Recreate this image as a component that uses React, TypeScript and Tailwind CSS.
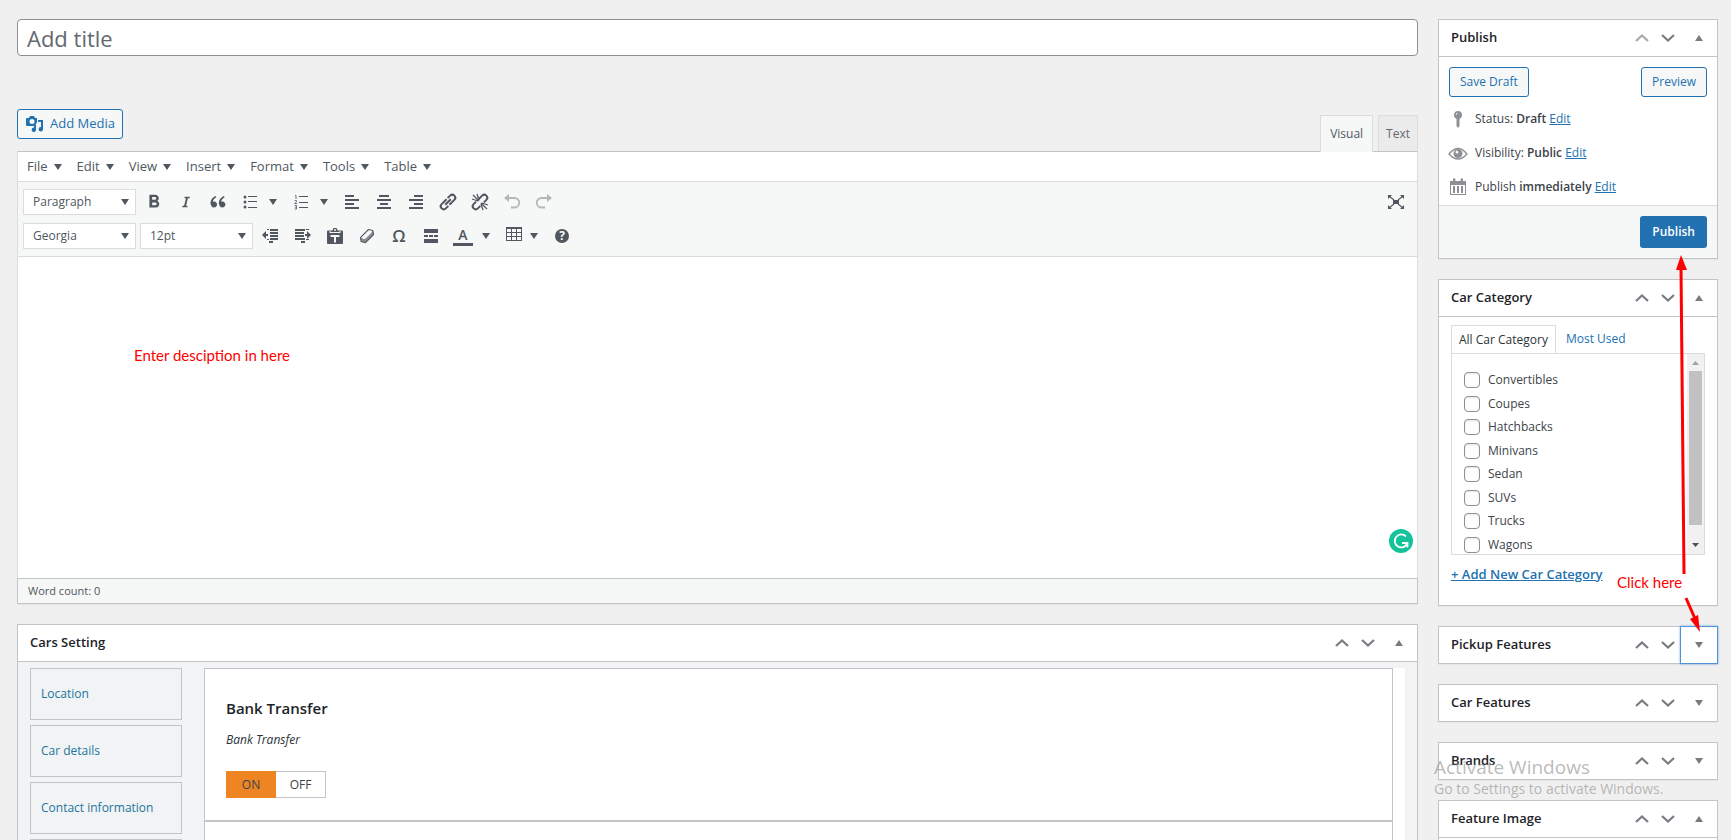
import type { ReactNode } from "react";
import { FaItalic } from "react-icons/fa";
import { MdFormatBold } from "react-icons/md";
import { RiDoubleQuotesL } from "react-icons/ri";

const menus = ["File", "Edit", "View", "Insert", "Format", "Tools", "Table"];

const categories = [
  "Convertibles",
  "Coupes",
  "Hatchbacks",
  "Minivans",
  "Sedan",
  "SUVs",
  "Trucks",
  "Wagons",
];

const settingTabs = ["Location", "Car details", "Contact information"];

function Svg({ children, className = "" }: { children: ReactNode; className?: string }) {
  return (
    <svg viewBox="0 0 20 20" width="20" height="20" fill="currentColor" className={`shrink-0 ${className}`} aria-hidden="true">
      {children}
    </svg>
  );
}

function Caret({ className = "" }: { className?: string }) {
  return (
    <svg viewBox="0 0 8 6" width="8" height="6" fill="currentColor" className={`shrink-0 ${className}`} aria-hidden="true">
      <path d="M0 0h8L4 6z" />
    </svg>
  );
}

/* Toolbar icons */
const icons = {
  bullets: (
    <Svg>
      <circle cx="5" cy="5" r="1.5" />
      <circle cx="5" cy="10" r="1.5" />
      <circle cx="5" cy="15" r="1.5" />
      <path d="M8 4h9v1H8zM8 9h9v1H8zM8 15h9v1H8z" />
    </Svg>
  ),
  numbers: (
    <Svg>
      <path d="M8 4h9v1H8zM8 10h9v1H8zM8 15h9v1H8z" />
      <path
        d="M4 3.5h1V7M3.5 8.5h2v1.3l-1.8 1.7H6M3.5 13.5h2v3.5h-2M4 15.2h1.5"
        fill="none"
        stroke="currentColor"
        strokeWidth="0.8"
      />
    </Svg>
  ),
  left: (
    <Svg>
      <path d="M3 3h9v2H3zM3 7h14v2H3zM3 11h9v2H3zM3 15h14v2H3z" />
    </Svg>
  ),
  center: (
    <Svg>
      <path d="M5 3h10v2H5zM3 7h14v2H3zM6 11h8v2H6zM3 15h14v2H3z" />
    </Svg>
  ),
  right: (
    <Svg>
      <path d="M8 3h9v2H8zM3 7h14v2H3zM8 11h9v2H8zM3 15h14v2H3z" />
    </Svg>
  ),
  link: (
    <Svg>
      <g transform="rotate(-45 10 10)" fill="none" stroke="currentColor" strokeWidth="2">
        <path d="M11 7H4a3 3 0 0 0 0 6H7.5M9 13h7a3 3 0 0 0 0-6H12.5" />
        <path d="M6 10h8" />
      </g>
    </Svg>
  ),
  unlink: (
    <Svg>
      <g transform="rotate(-45 10 10)" fill="none" stroke="currentColor" strokeWidth="2">
        <path d="M7.5 7H4a3 3 0 0 0 0 6h3.5M12.5 13H16a3 3 0 0 0 0-6H11" />
      </g>
      <path
        d="M9 9 3 3M9 8 7 2M8 9 2 7M11 11l6 6M12 11l6 2M11 12l2 6"
        fill="none"
        stroke="currentColor"
        strokeWidth="1.3"
      />
    </Svg>
  ),
  undo: (
    <Svg>
      <path d="M7 2v8L2 6z" />
      <path d="M6 6h6.5a4.5 4.5 0 0 1 0 9.5H9" fill="none" stroke="currentColor" strokeWidth="1.8" />
    </Svg>
  ),
  redo: (
    <Svg>
      <path d="M13 2v8l5-4z" />
      <path d="M14 6H7.5a4.5 4.5 0 0 0 0 9.5H11" fill="none" stroke="currentColor" strokeWidth="1.8" />
    </Svg>
  ),
  fullscreen: (
    <Svg>
      <path d="M7 8h6v4H7zM2 3h4L2 7zM18 3v4l-4-4zM2 17v-4l4 4zM18 17h-4l4-4z" />
      <path d="m3 4 5 4M17 4l-5 4M3 16l5-4M17 16l-5-4" stroke="currentColor" strokeWidth="1.1" />
    </Svg>
  ),
  outdent: (
    <Svg>
      <path d="M5 5v8L1 9z" />
      <path d="M4 8h3v2H4zM6 3h2v1H6zM9 3h8v2H9zM9 6h8v2H9zM9 9h8v2H9zM9 12h8v2H9zM6 13h2v1H6zM8 15h4v2H8z" />
    </Svg>
  ),
  indent: (
    <Svg>
      <path d="M14 5v8l4-4z" />
      <path d="M12 8h3v2h-3zM2 3h10v2H2zM13 3h3v1h-3zM2 6h9v2H2zM2 9h9v2H2zM2 12h10v2H2zM13 13h3v1h-3zM8 15h4v2H8z" />
    </Svg>
  ),
  paste: (
    <Svg>
      <path
        fillRule="evenodd"
        d="M8.5 2h3l1.2 2.5H17a1 1 0 0 1 1 1V17a1 1 0 0 1-1 1H3a1 1 0 0 1-1-1V5.5a1 1 0 0 1 1-1h4.3zM10 3a1 1 0 1 0 0 2 1 1 0 0 0 0-2zM4.5 5v2h11V5h-1v1h-9V5zM5.5 9v2H9v5.5h2V11h3.500V9z"
      />
    </Svg>
  ),
  eraser: (
    <Svg>
      <path d="M11.5 3.5 15.7 4.5 16.5 8.5 8.5 16.7 4.2 15.5 3.5 11.7z" fill="none" stroke="currentColor" strokeWidth="1.2" strokeLinejoin="round" />
      <path d="m3.5 12 4.5 1 8.3-8.2.5 3.7-8.300 8.3-4.300-1.200z" opacity=".65" />
      <path d="m4.5 11.7 7.2-7.2 3 .8-7.1 7.1z" fill="#f6f7f7" />
    </Svg>
  ),
  more: (
    <Svg>
      <path d="M3 3h14v4H3zM3 9h4v2H3zM8 9h4v2H8zM13 9h4v2h-4zM3 13h14v4H3z" />
    </Svg>
  ),
  table: (
    <Svg>
      <path fillRule="evenodd" d="M2 1h16v14H2zM3 3v3h4V3zM8 3v3h4V3zM13 3v3h4V3zM3 7v3h4V7zM8 7v3h4V7zM13 7v3h4V7zM3 11v3h4v-3zM8 11v3h4v-3zM13 11v3h4v-3z" />
    </Svg>
  ),
};

function Tool({ label, children, className = "" }: { label: string; children: ReactNode; className?: string }) {
  return (
    <button type="button" aria-label={label} className={`flex h-8 w-8 shrink-0 items-center justify-center ${className}`}>
      {children}
    </button>
  );
}

function SplitTool({ label, children, tight = false }: { label: string; children: ReactNode; tight?: boolean }) {
  return (
    <button type="button" aria-label={label} className={`flex h-8 shrink-0 items-center pl-1.5 ${tight ? "w-12 gap-1.5" : "w-[51px] gap-[9px]"}`}>
      {children}
      <Caret />
    </button>
  );
}

function ToolSelect({ label, value }: { label: string; value: string }) {
  return (
    <div className="relative w-[113px] shrink-0">
      <select
        aria-label={label}
        defaultValue={value}
        className="block h-[26px] w-full appearance-none border border-[#dcdcde] bg-white pl-[9px] text-[12px] text-[#50575e]"
      >
        <option>{value}</option>
      </select>
      <Caret className="pointer-events-none absolute top-[10px] right-[7px]" />
    </div>
  );
}

function HeaderControls({ open = true, firstDisabled = false, focused = false }: { open?: boolean; firstDisabled?: boolean; focused?: boolean }) {
  return (
    <div className="flex h-full items-center text-[#787c82]">
      <button type="button" aria-label="Move up" className={`flex h-9 w-[26px] items-center justify-center ${firstDisabled ? "text-[#a7aaad]" : ""}`}>
        <svg viewBox="0 0 14 8" width="14" height="8" fill="none" stroke="currentColor" strokeWidth="2.2">
          <path d="m1 7 6-5.5L13 7" />
        </svg>
      </button>
      <button type="button" aria-label="Move down" className="flex h-9 w-[26px] items-center justify-center">
        <svg viewBox="0 0 14 8" width="14" height="8" fill="none" stroke="currentColor" strokeWidth="2.2">
          <path d="m1 1 6 5.5L13 1" />
        </svg>
      </button>
      <button
        type="button"
        aria-label="Toggle panel"
        className={`-mr-px -ml-px flex h-[38px] w-[38px] items-center justify-center border ${focused ? "border-[#4f94d4] shadow-[0_0_2px_rgba(79,148,212,0.8)]" : "border-transparent"}`}
      >
        <svg viewBox="0 0 8 6" width="8" height="6" fill="currentColor">
          <path d={open ? "M4 0l4 6H0z" : "M0 0h8L4 6z"} />
        </svg>
      </button>
    </div>
  );
}

type PostboxProps = {
  title: string;
  open?: boolean;
  firstDisabled?: boolean;
  focused?: boolean;
  children?: ReactNode;
};

function Postbox({ title, children, open = true, firstDisabled, focused }: PostboxProps) {
  return (
    <section className="border border-[#c3c4c7] bg-white shadow-[0_1px_1px_rgba(0,0,0,0.04)]">
      <header className={`flex items-center justify-between pl-3 ${open ? "h-[37px] border-b border-[#c3c4c7]" : "h-9"}`}>
        <h2 className="text-[13px] font-semibold text-[#1d2327]">{title}</h2>
        <HeaderControls open={open} firstDisabled={firstDisabled} focused={focused} />
      </header>
      {open && children}
    </section>
  );
}

function MiscRow({ icon, label, value }: { icon: ReactNode; label: string; value: string }) {
  return (
    <div className="flex items-center gap-[7px] text-[12px] leading-5 text-[#3c434a]">
      <span className="text-[#8c8f94]">{icon}</span>
      <p>
        {label} <b className="font-semibold">{value}</b>{" "}
        <a href="#edit" className="text-[#2271b1] underline">
          Edit
        </a>
      </p>
    </div>
  );
}

function PublishBox() {
  return (
    <Postbox title="Publish" firstDisabled>
      <div className="flex justify-between px-[10px] pt-[10px]">
        <button type="button" className="h-[30px] rounded-[3px] border border-[#2271b1] bg-[#f6f7f7] px-[10px] text-[12px] text-[#2271b1]">
          Save Draft
        </button>
        <button type="button" className="h-[30px] rounded-[3px] border border-[#2271b1] bg-[#f6f7f7] px-[10px] text-[12px] text-[#2271b1]">
          Preview
        </button>
      </div>
      <div className="flex flex-col gap-[14px] px-[9px] pt-3 pb-2">
        <MiscRow
          icon={
            <Svg>
              <path fillRule="evenodd" d="M10 2a4 4 0 0 1 1.5 7.7V17L10 19l-1.5-2V9.7A4 4 0 0 1 10 2zM9 4a1.5 1.5 0 0 0-1 2l2-2z" />
            </Svg>
          }
          label="Status:"
          value="Draft"
        />
        <MiscRow
          icon={
            <Svg>
              <path d="M1 11q9-11 18 0-9 10-18 0z" fill="none" stroke="currentColor" strokeWidth="1.3" />
              <path fillRule="evenodd" d="M10 6a4.4 4.4 0 1 1 0 9 4.4 4.4 0 0 1 0-9zM9 7.5a1.5 1.5 0 1 0 1.5 1.5z" />
            </Svg>
          }
          label="Visibility:"
          value="Public"
        />
        <MiscRow
          icon={
            <Svg>
              <path fillRule="evenodd" d="M2 4h3V2.5a1.2 1.2 0 0 1 2.4 0V4h5.2V2.5a1.2 1.2 0 0 1 2.4 0V4h3v14H2zM3 8v9h14V8z" />
              <path d="M5 9h2v7H5zM9 9h2v7H9zM13 9h2v7h-2z" />
            </Svg>
          }
          label="Publish"
          value="immediately"
        />
      </div>
      <div className="flex justify-end border-t border-[#dcdcde] bg-[#f6f7f7] p-[10px]">
        <button type="button" className="h-8 rounded-[3px] bg-[#2271b1] px-3 text-[12px] font-semibold text-white">
          Publish
        </button>
      </div>
    </Postbox>
  );
}

function CategoryBox() {
  return (
    <Postbox title="Car Category">
      <div className="px-3 pt-2 pb-[21px]">
        <div className="flex text-[12px]" role="tablist">
          <button type="button" role="tab" aria-selected="true" className="relative z-10 -mb-px h-7 border border-b-0 border-[#dcdcde] bg-white px-[7px] text-[#2c3338]">
            All Car Category
          </button>
          <button type="button" role="tab" aria-selected="false" className="h-7 px-[10px] text-[#2271b1]">
            Most Used
          </button>
        </div>
        <div className="flex h-[202px] border border-[#dcdcde]">
          <ul className="flex flex-1 flex-col justify-between pt-[17px] pl-3">
            {categories.map((name) => (
              <li key={name}>
                <label className="flex h-[18px] items-center gap-2 text-[12px] text-[#3c434a]">
                  <input
                    type="checkbox"
                    className="h-4 w-4 appearance-none rounded-[4px] border border-[#8c8f94] bg-white shadow-[inset_0_1px_2px_rgba(0,0,0,0.1)]"
                  />
                  {name}
                </label>
              </li>
            ))}
          </ul>
          <div className="flex w-[17px] flex-col items-center bg-[#f1f1f1]">
            <svg viewBox="0 0 17 17" width="17" height="17">
              <path d="M5 11h7L8.5 7z" fill="#a3a3a3" />
            </svg>
            <div className="w-[13px] flex-1 bg-[#c1c1c1]" />
            <svg viewBox="0 0 17 29" width="17" height="29">
              <path d="M5 18h7l-3.5 4z" fill="#505050" />
            </svg>
          </div>
        </div>
        <a href="#add" className="mt-[9px] block w-fit text-[13px] leading-5 font-semibold text-[#2271b1] underline">
          + Add New Car Category
        </a>
      </div>
    </Postbox>
  );
}

function Editor() {
  return (
    <section>
      <div className="flex items-end justify-between">
        <button type="button" className="mb-3 flex h-[30px] items-center gap-[5px] rounded-[3px] border border-[#2271b1] bg-[#f6f7f7] px-[7px] text-[13px] text-[#2271b1]">
          <Svg>
            <path
              fillRule="evenodd"
              d="M2 4h2l1-2h4l1 2h2v4.5L9.5 12H2a1 1 0 0 1-1-1V5a1 1 0 0 1 1-1zM7 5a2.5 2.5 0 1 0 0 5 2.5 2.5 0 0 0 0-5z"
            />
            <path d="M13 6h5v9.5a2.2 2.2 0 1 1-2-2.5V8h-3zM11 10v6a2.2 2.2 0 1 1-2-2.5V12z" />
          </Svg>
          Add Media
        </button>
        <div className="flex text-[12px] text-[#646970]" role="tablist">
          <button type="button" role="tab" aria-selected="true" className="relative z-10 -mb-px mr-[5px] h-[37px] border border-b-0 border-[#dcdcde] bg-[#f6f7f7] px-[9px] text-[#50575e]">
            Visual
          </button>
          <button type="button" role="tab" aria-selected="false" className="h-9 border border-b-0 border-[#dcdcde] bg-[#ebebeb] px-[7px]">
            Text
          </button>
        </div>
      </div>

      <div className="border border-[#dcdcde] border-t-[#c3c4c7] bg-white text-[#50575e]">
        <div className="flex h-[29px] items-center gap-[15px] pl-[9px] text-[13px]">
          {menus.map((name) => (
            <button key={name} type="button" className="flex items-center gap-[6px]">
              {name}
              <Caret />
            </button>
          ))}
        </div>
        <div className="border-y border-[#dcdcde] bg-[#f6f7f7] px-[5px] py-1">
          <div className="flex items-center">
            <ToolSelect label="Format" value="Paragraph" />
            <Tool label="Bold" className="ml-[2px]">
              <MdFormatBold size={22} />
            </Tool>
            <Tool label="Italic">
              <FaItalic size={12} />
            </Tool>
            <Tool label="Blockquote">
              <RiDoubleQuotesL size={20} />
            </Tool>
            <SplitTool label="Bulleted list">{icons.bullets}</SplitTool>
            <SplitTool label="Numbered list">{icons.numbers}</SplitTool>
            <Tool label="Align left">{icons.left}</Tool>
            <Tool label="Align center">{icons.center}</Tool>
            <Tool label="Align right">{icons.right}</Tool>
            <Tool label="Insert link">{icons.link}</Tool>
            <Tool label="Remove link">{icons.unlink}</Tool>
            <Tool label="Undo" className="text-[#b4b7ba]">
              {icons.undo}
            </Tool>
            <Tool label="Redo" className="text-[#b4b7ba]">
              {icons.redo}
            </Tool>
            <Tool label="Fullscreen" className="ml-auto">
              {icons.fullscreen}
            </Tool>
          </div>
          <div className="mt-[2px] flex items-center">
            <ToolSelect label="Font family" value="Georgia" />
            <div className="mr-[2px] ml-1">
              <ToolSelect label="Font size" value="12pt" />
            </div>
            <Tool label="Decrease indent">{icons.outdent}</Tool>
            <Tool label="Increase indent">{icons.indent}</Tool>
            <Tool label="Paste as text">{icons.paste}</Tool>
            <Tool label="Clear formatting">{icons.eraser}</Tool>
            <Tool label="Special character">
              <span className="text-[17px] font-semibold">Ω</span>
            </Tool>
            <Tool label="Read more">{icons.more}</Tool>
            <SplitTool label="Text color">
              <span className="flex h-5 w-5 flex-col items-center border-b-[3px] border-current text-[14px] leading-[18px] font-semibold">A</span>
            </SplitTool>
            <SplitTool label="Insert table" tight>
              {icons.table}
            </SplitTool>
            <Tool label="Help">
              <span className="flex h-[14px] w-[14px] items-center justify-center rounded-full bg-[#50575e] text-[12px] leading-none font-bold text-[#f6f7f7]">?</span>
            </Tool>
          </div>
        </div>
        <div className="relative h-[321px]">
          <p className="pt-[88px] pl-[116px] font-['Lato',sans-serif] text-[15px] leading-5 text-[#ff0000]">Enter desciption in here</p>
          <button type="button" aria-label="Check writing" className="absolute right-1 bottom-[25px] flex h-6 w-6 items-center justify-center rounded-full bg-[#15c39a]">
            <svg viewBox="0 0 24 24" width="24" height="24" fill="none" stroke="#fff" strokeWidth="1.8">
              <path d="M17 7.5A6.5 6.5 0 1 0 18 15" />
              <path d="M13 14h5.5v4.5" />
            </svg>
          </button>
        </div>
      </div>
      <div className="-mt-px flex h-[26px] items-center border border-[#c3c4c7] bg-[#f6f7f7] pl-[10px] text-[11px] text-[#50575e] shadow-[0_1px_1px_rgba(0,0,0,0.04)]">
        Word count: 0
      </div>
    </section>
  );
}

function CarsSetting() {
  return (
    <Postbox title="Cars Setting">
      <div className="flex gap-[22px] bg-[#f2f3f5] px-3 pt-[6px]">
        <nav className="flex w-[152px] shrink-0 flex-col gap-[5px]">
          {settingTabs.map((name) => (
            <a key={name} href="#tab" className="flex h-[52px] items-center border border-[#c3c4c7] pl-[10px] text-[12px] text-[#21759b]">
              {name}
            </a>
          ))}
          <span className="h-[52px] border border-[#c3c4c7]" />
        </nav>
        <div className="flex-1 bg-white pr-3">
          <div className="h-[154px] border border-[#c3c4c7] border-b-2 px-[21px] pt-[27px]">
            <h3 className="text-[15px] leading-6 font-semibold text-[#1d2327]">Bank Transfer</h3>
            <p className="mt-[10px] text-[12px] leading-5 text-[#2c3338] italic">Bank Transfer</p>
            <div className="mt-[21px] flex h-[27px] text-[12px] text-[#3c434a]">
              <button type="button" className="w-[50px] bg-[#ef8423]">
                ON
              </button>
              <button type="button" className="w-[50px] border border-l-0 border-[#c3c4c7] bg-white">
                OFF
              </button>
            </div>
          </div>
          <div className="h-[154px] border border-t-0 border-[#c3c4c7]" />
        </div>
      </div>
    </Postbox>
  );
}

export default function App() {
  return (
    <div className="relative h-screen overflow-hidden bg-[#f0f0f0] font-['Open_Sans','Noto_Sans',sans-serif]">
      <div className="flex items-start gap-5 pt-[19px] pr-[13px] pl-[17px]">
        <main className="min-w-0 flex-1">
          <input
            type="text"
            aria-label="Title"
            placeholder="Add title"
            className="block h-[37px] w-full rounded-[4px] border border-[#8c8f94] bg-white px-[9px] text-[22px] placeholder:text-[#646970]"
          />
          <div className="mt-[53px]">
            <Editor />
          </div>
          <div className="mt-5">
            <CarsSetting />
          </div>
        </main>

        <aside className="relative flex w-[280px] shrink-0 flex-col gap-5">
          <PublishBox />
          <CategoryBox />
          <Postbox title="Pickup Features" open={false} focused />
          <Postbox title="Car Features" open={false} />
          <Postbox title="Brands" open={false} />
          <Postbox title="Feature Image">
            <div className="h-40" />
          </Postbox>

          {/* Annotations over the sidebar */}
          <svg viewBox="0 0 280 640" width="280" height="640" className="pointer-events-none absolute top-0 left-0" aria-hidden="true">
            <path d="m246 555-3-306" stroke="#f00" strokeWidth="3" />
            <path d="m243 236 6 15h-11z" fill="#f00" />
            <path d="m248 579 10 23" stroke="#f00" strokeWidth="3" />
            <path d="m262 613-10-13 8-4z" fill="#f00" />
          </svg>
          <p className="pointer-events-none absolute top-[553px] left-[179px] font-['Lato',sans-serif] text-[15px] leading-5 text-[#ff0000]">Click here</p>
        </aside>
      </div>

      <div className="pointer-events-none absolute right-[60px] bottom-[41px] z-20 w-[237px] whitespace-nowrap text-[#8c8c8c]/60">
        <p className="text-[19px] leading-6">Activate Windows</p>
        <p className="text-[14px] leading-5">Go to Settings to activate Windows.</p>
      </div>
    </div>
  );
}
